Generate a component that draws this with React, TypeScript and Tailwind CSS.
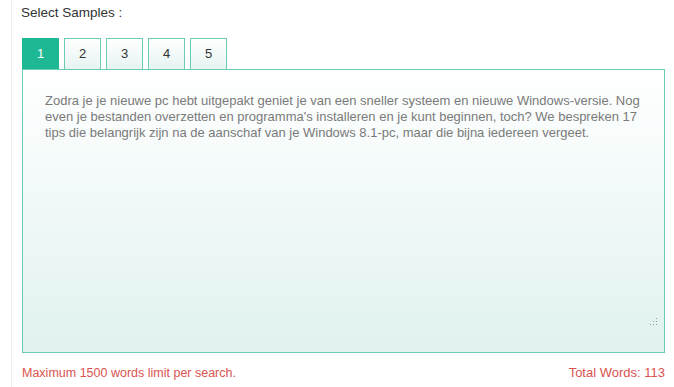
const tabs = ['1', '2', '3', '4', '5'];

const sample =
  "Zodra je je nieuwe pc hebt uitgepakt geniet je van een sneller systeem en nieuwe Windows-versie. Nog even je bestanden overzetten en programma's installeren en je kunt beginnen, toch? We bespreken 17 tips die belangrijk zijn na de aanschaf van je Windows 8.1-pc, maar die bijna iedereen vergeet.";

export default function App() {
  return (
    <div className="w-[674px] h-[387px] bg-white overflow-hidden font-['Liberation_Sans',Arial,sans-serif]">
      <div className="ml-[11px] h-full border-l border-[#f0f0f0] pl-[9px] pr-[10px]">
        <div className="pt-[5px] text-[13.5px] leading-[16px] text-[#333]">Select Samples :</div>

        <div className="mt-[17px] flex gap-[5px] pl-px">
          {tabs.map((t, i) => (
            <button
              key={t}
              className={
                i === 0
                  ? 'w-[37px] h-[31px] bg-[#1eb894] border border-[#1eb894] text-white text-[13px]'
                  : 'w-[37px] h-[31px] bg-gradient-to-b from-white to-[#e6f4f2] border border-[#6ccbb5] border-b-0 text-[#333] text-[13px]'
              }
            >
              {t}
            </button>
          ))}
        </div>

        <div className="relative ml-px w-[643px] h-[284px] border border-[#6ccbb5] bg-gradient-to-b from-white to-[#e0f2f0] px-[22px] pt-[23px]">
          <p className="text-[13px] leading-[16px] text-[#7a7a7a]">{sample}</p>
          <svg className="absolute right-[6px] bottom-[26px]" width="8" height="8" viewBox="0 0 8 8">
            <rect x="6" y="0" width="1" height="1" fill="#999" />
            <rect x="6" y="3" width="1" height="1" fill="#999" />
            <rect x="3" y="3" width="1" height="1" fill="#999" />
            <rect x="6" y="6" width="1" height="1" fill="#999" />
            <rect x="3" y="6" width="1" height="1" fill="#999" />
            <rect x="0" y="6" width="1" height="1" fill="#999" />
          </svg>
        </div>

        <div className="mt-[13px] ml-px w-[643px] flex justify-between leading-[14px] text-[#d9534f]">
          <span className="text-[12.5px]">Maximum 1500 words limit per search.</span>
          <span className="text-[13px]">Total Words: 113</span>
        </div>
      </div>
    </div>
  );
}
